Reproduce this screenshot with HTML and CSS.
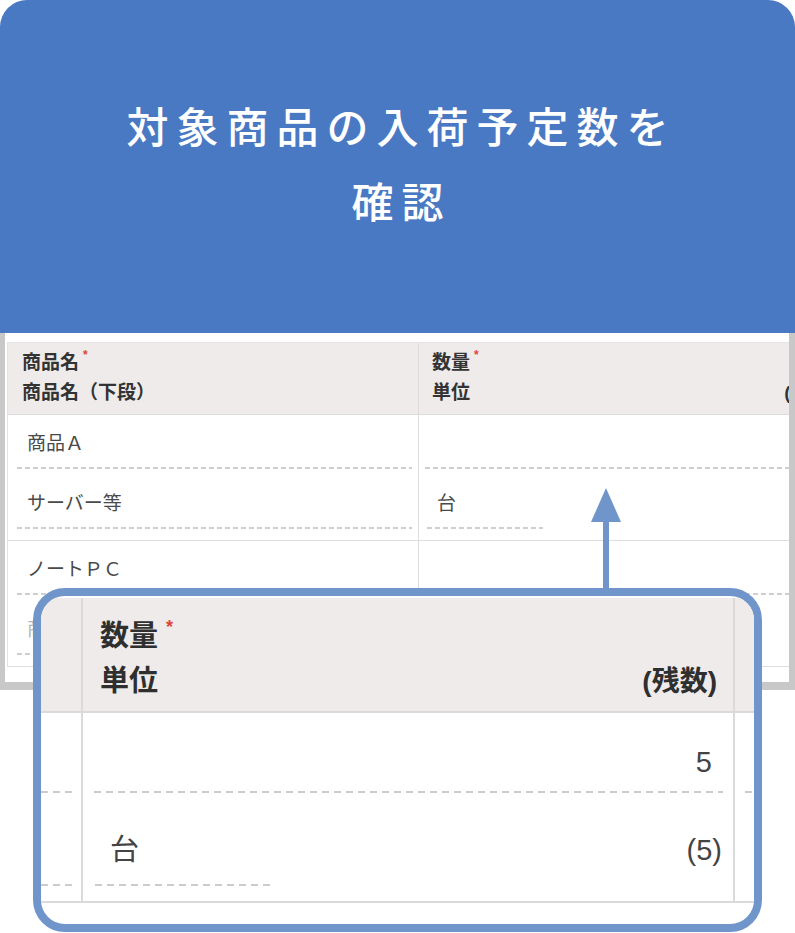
FILE: index.html
```html
<!DOCTYPE html>
<html lang="ja">
<head>
    <meta charset="UTF-8">
    <meta name="viewport" content="width=device-width, initial-scale=1.0">
    <title>入荷予定数の確認</title>
    <link rel="stylesheet" href="styles.css">
</head>
<body>
    <div class="hero">
        <h1 class="hero-title">対象商品の入荷予定数を<br>確認</h1>
    </div>

    <!-- screenshot of the order sheet -->
    <div class="shot">
        <div class="sheet">
            <div class="sheet-head">
                <div class="head-cell">
                    <div>商品名<span class="req">*</span></div>
                    <div>商品名（下段）</div>
                </div>
                <div class="head-cell">
                    <div>数量<span class="req">*</span></div>
                    <div class="head-split"><span>単位</span><span>(残数)</span></div>
                </div>
            </div>
            <div class="sheet-row">
                <div class="cell">
                    <div class="line">商品Ａ</div>
                    <div class="line second">サーバー等</div>
                </div>
                <div class="cell">
                    <div class="line">&nbsp;</div>
                    <div class="line second split"><span class="unit">台</span></div>
                </div>
            </div>
            <div class="sheet-row">
                <div class="cell">
                    <div class="line">ノートＰＣ</div>
                    <div class="line second faded">商品Ｂ</div>
                </div>
                <div class="cell">
                    <div class="line">&nbsp;</div>
                </div>
            </div>
        </div>
    </div>

    <!-- zoomed part of the quantity column -->
    <div class="callout">
        <svg class="pointer" width="30" height="108" viewBox="0 0 30 108">
            <polygon points="15,0 30,34 0,34" fill="#7095cb"/>
            <rect x="12" y="32" width="6" height="76" fill="#7095cb"/>
        </svg>
        <div class="zoom-sheet">
            <div class="zoom-head">
                <div class="zoom-head-cell"></div>
                <div class="zoom-head-cell main">
                    <div>数量<span class="req big">*</span></div>
                    <div class="head-split"><span>単位</span><span class="rest">(残数)</span></div>
                </div>
                <div class="zoom-head-cell"></div>
            </div>
            <div class="zoom-row">
                <div class="zoom-cell">
                    <div class="zline edge-left">&nbsp;</div>
                    <div class="zline edge-left second">&nbsp;</div>
                </div>
                <div class="zoom-cell">
                    <div class="zline">5</div>
                    <div class="zline second split"><span class="zunit">台</span><span>(5)</span></div>
                </div>
                <div class="zoom-cell">
                    <div class="zline edge-right">&nbsp;</div>
                </div>
            </div>
        </div>
    </div>
</body>
</html>
```

FILE: styles.css
```css
body {
    margin: 0;
    background-color: #fff;
    font-family: "Noto Sans CJK JP", sans-serif;
}
.hero {
    height: 333px;
    box-sizing: border-box;
    padding-top: 87px;
    background-color: #4979c3;
    border-radius: 27px 27px 0 0;
}
.hero-title {
    margin: 0;
    padding-left: 8px;
    text-align: center;
    color: #fff;
    font-size: 42px;
    font-weight: 500;
    line-height: 75px;
    letter-spacing: 8px;
}

/* small sheet */
.shot {
    height: 357px;
    box-sizing: border-box;
    padding: 9px 0 0 2px;
    border: solid #c8c8c8;
    border-width: 0 6px 8px 5px;
    overflow: hidden;
}
.sheet {
    width: 838px;
    border-left: 1px solid #e2e2e2;
    font-family: "Liberation Sans", "Noto Sans CJK JP", sans-serif;
    font-size: 19px;
    color: #4a4a4a;
}
.sheet-head, .sheet-row {
    display: grid;
    grid-template-columns: 410px 428px;
}
.sheet-head {
    background-color: #eeebea;
    border-top: 1px solid #e6e3e2;
    border-bottom: 1px solid #dcdcdc;
}
.head-cell {
    padding: 5px 11px 6px 14px;
    line-height: 30px;
    font-weight: bold;
    color: #333;
}
.head-cell + .head-cell {
    border-left: 1px solid #dcdcdc;
    padding-left: 13px;
}
.head-split {
    display: flex;
    justify-content: space-between;
}
.req {
    display: inline-block;
    margin-left: 4px;
    vertical-align: top;
    color: #e0453c;
    font-size: 12px;
    line-height: 14px;
}
.req.big {
    margin-left: 8px;
    font-size: 18px;
    line-height: 26px;
}
.sheet-row {
    border-bottom: 1px solid #dedede;
}
.cell {
    padding-bottom: 11px;
}
.cell + .cell {
    border-left: 1px solid #dedede;
}
.line, .unit, .zline, .zunit {
    background: repeating-linear-gradient(90deg, #cfcfcf 0 5px, transparent 5px 8px) left bottom / 100% 2px no-repeat;
}
.line {
    margin: 0 6px 0 9px;
    padding: 15px 0 11px 10px;
    line-height: 28px;
}
.line.second {
    padding-top: 21px;
}
.line.faded {
    color: #b5b5b5;
}
.cell + .cell .line {
    margin-left: 6px;
    padding-left: 12px;
}
.line.split, .zline.split {
    display: flex;
    justify-content: space-between;
    background: none;
}
.cell + .cell .line.split {
    margin-left: 8px;
    padding: 21px 11px 0 0;
}
.unit {
    width: 106px;
    padding: 0 0 11px 10px;
}

/* zoomed sheet */
.callout {
    position: relative;
    box-sizing: border-box;
    width: 729px;
    height: 344px;
    margin: -102px 0 0 33px;
    border: 8px solid #7095cb;
    border-radius: 32px;
    background-color: #fff;
}
.pointer {
    position: absolute;
    left: 550px;
    bottom: 100%;
    display: block;
}
.zoom-sheet {
    height: 100%;
    box-sizing: border-box;
    padding-top: 2px;
    border-radius: 24px;
    overflow: hidden;
    font-family: "Liberation Sans", "Noto Sans CJK JP", sans-serif;
    font-size: 29px;
    color: #444;
}
.zoom-head, .zoom-row {
    display: grid;
    grid-template-columns: 40px 652px 21px;
}
.zoom-head {
    background-color: #eeebea;
    border-bottom: 2px solid #dadada;
}
.zoom-head-cell + .zoom-head-cell {
    border-left: 2px solid #dadada;
}
.zoom-head-cell.main {
    padding: 16px 16px 7px 17px;
    line-height: 45px;
    font-weight: bold;
    color: #2f2f2f;
}
.rest {
    font-size: 28px;
}
.zoom-row {
    border-bottom: 2px solid #dadada;
}
.zoom-cell {
    padding-bottom: 15px;
}
.zoom-cell + .zoom-cell {
    border-left: 2px solid #dadada;
}
.zline {
    margin: 0 10px 0 11px;
    padding: 29px 11px 11px 0;
    line-height: 40px;
    text-align: right;
    background-image: repeating-linear-gradient(90deg, #cccccc 0 7px, transparent 7px 12px);
}
.zline.second {
    padding-top: 37px;
    padding-bottom: 16px;
}
.zline.edge-left {
    margin: 0 6px 0 0;
}
.zline.edge-right {
    margin: 0 0 0 10px;
}
.zline.split {
    margin-left: 12px;
    padding: 37px 1px 0 0;
}
.zunit {
    width: 160px;
    padding: 0 0 16px 15px;
    text-align: left;
    background-image: repeating-linear-gradient(90deg, #cccccc 0 7px, transparent 7px 12px);
}
```
